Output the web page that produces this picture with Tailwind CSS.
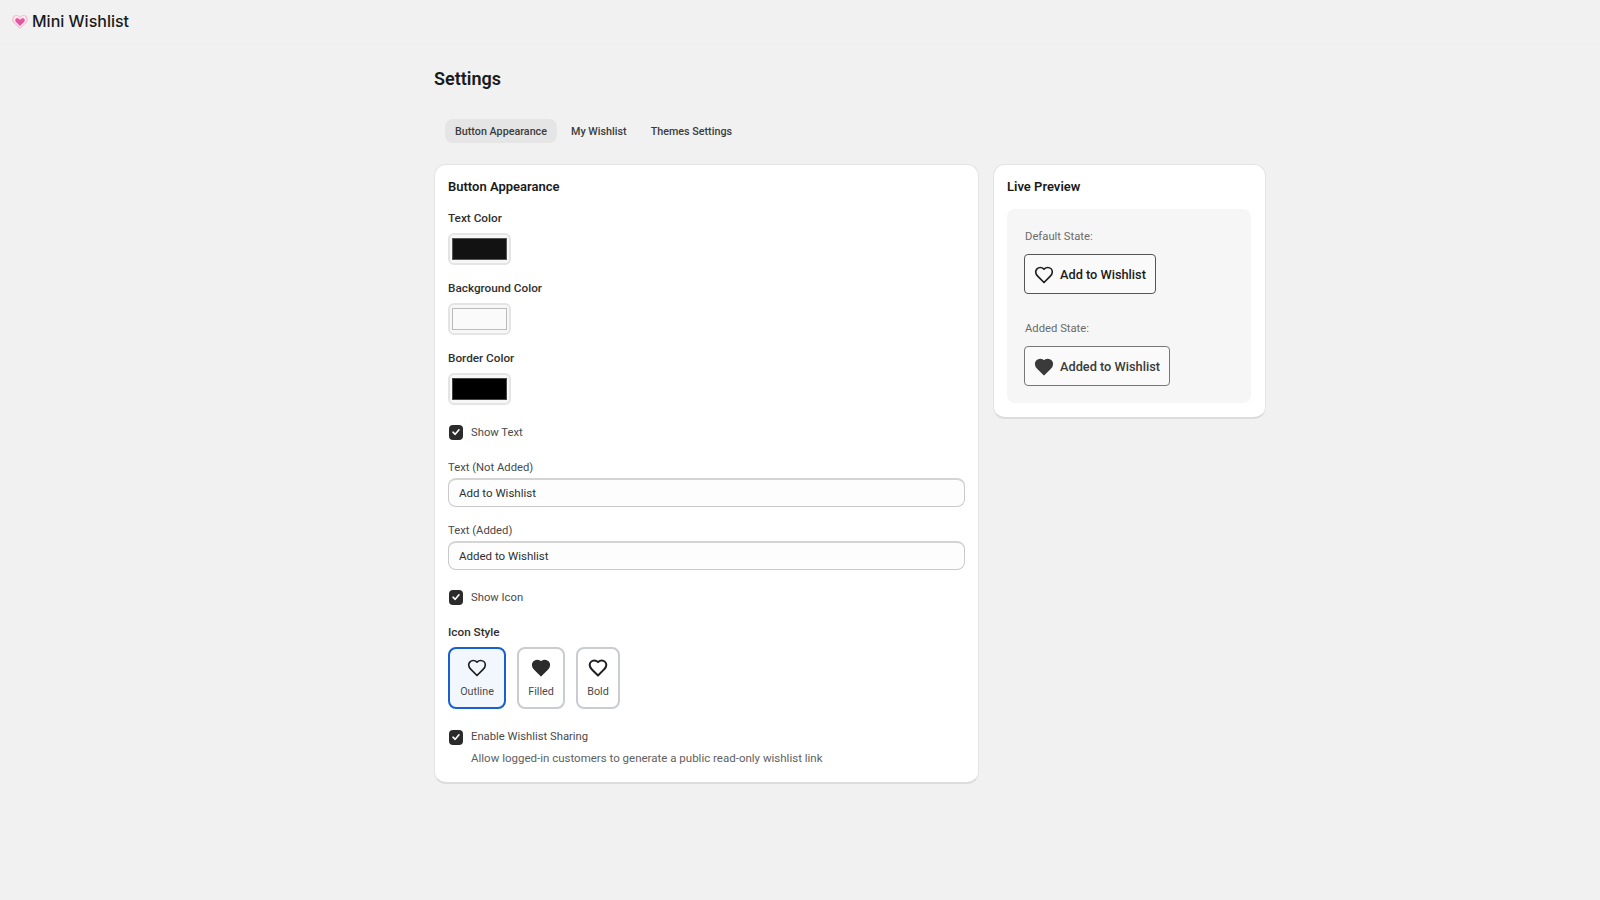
<!DOCTYPE html>
<html lang="en">
<head>
  <meta charset="UTF-8">
  <title>Mini Wishlist - Settings</title>
  <script src="https://cdn.jsdelivr.net/npm/@tailwindcss/browser@4"></script>
</head>
<body class="bg-[#f1f1f1] h-[900px] overflow-hidden font-['Roboto',sans-serif] text-[#303030]">
  <!-- Header -->
  <header class="h-[44px] flex items-center pl-[12px] gap-[4px] border-b border-[#efefef]">
    <svg class="w-[16px] h-[14px]" viewBox="0 0 24 21">
      <path d="M12 21 2.500 12C-.5 9 -.5 4.500 2 2 5-.8 9.500-.3 12 2.800 14.500-.3 19-.8 22 2 24.500 4.500 24.500 9 21.500 12Z" fill="#f6bccd"/>
      <path d="M12 19 3.800 11C1.500 8.500 1.500 5 3.500 3.200 6-.8 9.800 1.500 12 4.800 14.200 1.500 18-.8 20.500 3.200 22.500 5 22.500 8.500 20.200 11Z" fill="#fde8ee"/>
      <path d="M12 16.500 6 10.500C4.500 9 4.500 6.500 6 5.200 8 4 10.500 5 12 7.500 13.500 5 16 4 18 5.200 19.500 6.500 19.500 9 18 10.500Z" fill="#e4559f"/>
    </svg>
    <span class="font-['Inter',sans-serif] text-[16px] font-medium text-[#1a1a1a] pb-[2px]">Mini Wishlist</span>
  </header>

  <main class="ml-[434px] w-[832px]">
    <h1 class="h-[26px] mt-[22px] leading-[26px] text-[18px] font-semibold text-[#1a1a1a]">Settings</h1>

    <!-- Tabs -->
    <nav class="mt-[27px] ml-[11px] flex items-center text-[10.750px] font-medium text-[#3c3c3c] h-[24px] whitespace-nowrap">
      <span class="h-[24px] w-[112px] pt-[2px] flex items-center justify-center rounded-lg bg-[#e5e5e5]">Button Appearance</span>
      <span class="ml-[14px] pt-[2px]">My Wishlist</span>
      <span class="ml-[24px] pt-[2px]">Themes Settings</span>
    </nav>

    <div class="mt-[21px] grid grid-cols-[545px_273px] gap-[14px] items-start">
      <!-- Settings card -->
      <section class="bg-white rounded-xl border border-[#e3e3e3] border-b-2 border-b-[#dcdcdc] px-[13px] pt-[12px] pb-[16px]">
        <h2 class="h-[20px] leading-[20px] text-[13px] font-semibold text-[#1a1a1a]">Button Appearance</h2>

        <div class="mt-[13px]">
          <label class="block h-[16px] leading-[16px] text-[11.750px] font-medium">Text Color</label>
          <div class="mt-[7px] w-[63px] h-[32px] px-[2px] py-[3px] rounded-md border-2 border-[#e4e4e4] bg-[#f7f7f7]"><div class="h-full bg-[#121212] border border-[#555]"></div></div>
        </div>
        <div class="mt-[15px]">
          <label class="block h-[16px] leading-[16px] text-[11.750px] font-medium">Background Color</label>
          <div class="mt-[7px] w-[63px] h-[32px] px-[2px] py-[3px] rounded-md border-2 border-[#e4e4e4] bg-[#f7f7f7]"><div class="h-full bg-[#fafafa] border border-[#bbb]"></div></div>
        </div>
        <div class="mt-[15px]">
          <label class="block h-[16px] leading-[16px] text-[11.750px] font-medium">Border Color</label>
          <div class="mt-[7px] w-[63px] h-[32px] px-[2px] py-[3px] rounded-md border-2 border-[#e4e4e4] bg-[#f7f7f7]"><div class="h-full bg-black border border-[#444]"></div></div>
        </div>

        <div class="mt-[19px] h-[16px] flex items-center gap-[8px] text-[11.250px] text-[#4a4a4a]">
          <span class="ml-[1px] w-[14px] h-[15px] rounded-[4px] bg-[#2b2b2b] flex items-center justify-center">
            <svg class="w-[10px] h-[10px]" viewBox="0 0 10 10" fill="none" stroke="#fff" stroke-width="1.600" stroke-linecap="round" stroke-linejoin="round"><path d="M2 5.200 4.200 7.300 8 2.800"/></svg>
          </span>
          <span class="pt-[2px]">Show Text</span>
        </div>

        <label class="block mt-[19px] h-[16px] leading-[18px] text-[11.250px] text-[#4a4a4a]">Text (Not Added)</label>
        <div class="mt-[3px] h-[29px] pt-[1px] flex items-center px-[10px] rounded-lg border border-[#c9c9c9] border-t-2 border-t-[#d4d4d4] bg-[#fdfdfd] text-[11.500px]">Add to Wishlist</div>

        <label class="block mt-[15px] h-[16px] leading-[18px] text-[11.250px] text-[#4a4a4a]">Text (Added)</label>
        <div class="mt-[3px] h-[29px] pt-[1px] flex items-center px-[10px] rounded-lg border border-[#c9c9c9] border-t-2 border-t-[#d4d4d4] bg-[#fdfdfd] text-[11.500px]">Added to Wishlist</div>

        <div class="mt-[19px] h-[16px] flex items-center gap-[8px] text-[11.250px] text-[#4a4a4a]">
          <span class="ml-[1px] w-[14px] h-[15px] rounded-[4px] bg-[#2b2b2b] flex items-center justify-center">
            <svg class="w-[10px] h-[10px]" viewBox="0 0 10 10" fill="none" stroke="#fff" stroke-width="1.600" stroke-linecap="round" stroke-linejoin="round"><path d="M2 5.200 4.200 7.300 8 2.800"/></svg>
          </span>
          <span class="pt-[2px]">Show Icon</span>
        </div>

        <label class="block mt-[19px] h-[16px] leading-[16px] text-[11.750px] font-medium">Icon Style</label>
        <div class="mt-[7px] flex gap-[11px] text-[10.750px] text-[#4a4a4a]">
          <div class="w-[58px] h-[62px] rounded-lg border-2 border-[#1a5fd0] bg-[#f2f7fe] flex flex-col items-center pt-[9px]">
            <svg class="w-[20px] h-[20px]" viewBox="0 0 24 24" fill="none" stroke="#1f1f1f" stroke-width="2" stroke-linejoin="round"><path d="M19 14c1.490-1.460 3-3.210 3-5.500A5.500 5.500 0 0 0 16.500 3c-1.760 0-3 .5-4.500 2-1.500-1.500-2.740-2-4.500-2A5.500 5.500 0 0 0 2 8.500c0 2.300 1.500 4.050 3 5.500l7 7Z"/></svg>
            <span class="mt-[6px] leading-[16px]">Outline</span>
          </div>
          <div class="w-[48px] h-[62px] rounded-lg border-2 border-[#c9ccd1] bg-white flex flex-col items-center pt-[9px]">
            <svg class="w-[20px] h-[20px]" viewBox="0 0 24 24" fill="#2b2b2b" stroke="#2b2b2b" stroke-width="2" stroke-linejoin="round"><path d="M19 14c1.490-1.460 3-3.210 3-5.500A5.500 5.500 0 0 0 16.500 3c-1.760 0-3 .5-4.500 2-1.500-1.500-2.740-2-4.500-2A5.500 5.500 0 0 0 2 8.500c0 2.300 1.500 4.050 3 5.500l7 7Z"/></svg>
            <span class="mt-[6px] leading-[16px]">Filled</span>
          </div>
          <div class="w-[44px] h-[62px] rounded-lg border-2 border-[#c9ccd1] bg-white flex flex-col items-center pt-[9px]">
            <svg class="w-[20px] h-[20px]" viewBox="0 0 24 24" fill="none" stroke="#1f1f1f" stroke-width="2.400" stroke-linejoin="round"><path d="M19 14c1.490-1.460 3-3.210 3-5.500A5.500 5.500 0 0 0 16.500 3c-1.760 0-3 .5-4.500 2-1.500-1.500-2.740-2-4.500-2A5.500 5.500 0 0 0 2 8.500c0 2.300 1.500 4.050 3 5.500l7 7Z"/></svg>
            <span class="mt-[6px] leading-[16px]">Bold</span>
          </div>
        </div>

        <div class="mt-[20px] h-[16px] flex items-center gap-[8px] text-[11.250px] text-[#4a4a4a]">
          <span class="ml-[1px] w-[14px] h-[15px] rounded-[4px] bg-[#2b2b2b] flex items-center justify-center">
            <svg class="w-[10px] h-[10px]" viewBox="0 0 10 10" fill="none" stroke="#fff" stroke-width="1.600" stroke-linecap="round" stroke-linejoin="round"><path d="M2 5.200 4.200 7.300 8 2.800"/></svg>
          </span>
          <span>Enable Wishlist Sharing</span>
        </div>
        <p class="mt-[5px] ml-[23px] h-[16px] leading-[16px] text-[11.500px] text-[#616161]">Allow logged-in customers to generate a public read-only wishlist link</p>
      </section>

      <!-- Live preview -->
      <section class="bg-white rounded-xl border border-[#e3e3e3] border-b-2 border-b-[#dcdcdc] pl-[13px] pr-[14px] pt-[12px] pb-[14px]">
        <h2 class="h-[20px] leading-[20px] text-[13px] font-semibold text-[#1a1a1a]">Live Preview</h2>
        <div class="mt-[12px] rounded-lg bg-[#f6f6f6] pl-[17px] pt-[19px] pb-[17px]">
          <p class="pl-[1px] h-[16px] leading-[18px] text-[11.250px] text-[#6b6b6b]">Default State:</p>
          <div class="mt-[10px] w-[132px] h-[40px] pt-[1px] flex items-center gap-[6px] pl-[9px] rounded-[4px] border border-[#555] bg-[#fafafa] text-[12.750px] font-medium text-[#1a1a1a] whitespace-nowrap">
            <svg class="w-[20px] h-[20px] shrink-0" viewBox="0 0 24 24" fill="none" stroke="#1f1f1f" stroke-width="2" stroke-linejoin="round"><path d="M19 14c1.490-1.460 3-3.210 3-5.500A5.500 5.500 0 0 0 16.500 3c-1.760 0-3 .5-4.500 2-1.500-1.500-2.740-2-4.500-2A5.500 5.500 0 0 0 2 8.500c0 2.300 1.500 4.050 3 5.500l7 7Z"/></svg>
            Add to Wishlist
          </div>
          <p class="pl-[1px] mt-[26px] h-[16px] leading-[18px] text-[11.250px] text-[#6b6b6b]">Added State:</p>
          <div class="mt-[10px] w-[146px] h-[40px] pt-[1px] flex items-center gap-[6px] pl-[9px] rounded-[4px] border border-[#777] bg-[#fafafa] text-[12.750px] font-medium text-[#3a3a3a] whitespace-nowrap">
            <svg class="w-[20px] h-[20px] shrink-0" viewBox="0 0 24 24" fill="#3a3a3a" stroke="#3a3a3a" stroke-width="2" stroke-linejoin="round"><path d="M19 14c1.490-1.460 3-3.210 3-5.500A5.500 5.500 0 0 0 16.500 3c-1.760 0-3 .5-4.500 2-1.500-1.500-2.740-2-4.500-2A5.500 5.500 0 0 0 2 8.500c0 2.300 1.500 4.050 3 5.500l7 7Z"/></svg>
            Added to Wishlist
          </div>
        </div>
      </section>
    </div>
  </main>
</body>
</html>
